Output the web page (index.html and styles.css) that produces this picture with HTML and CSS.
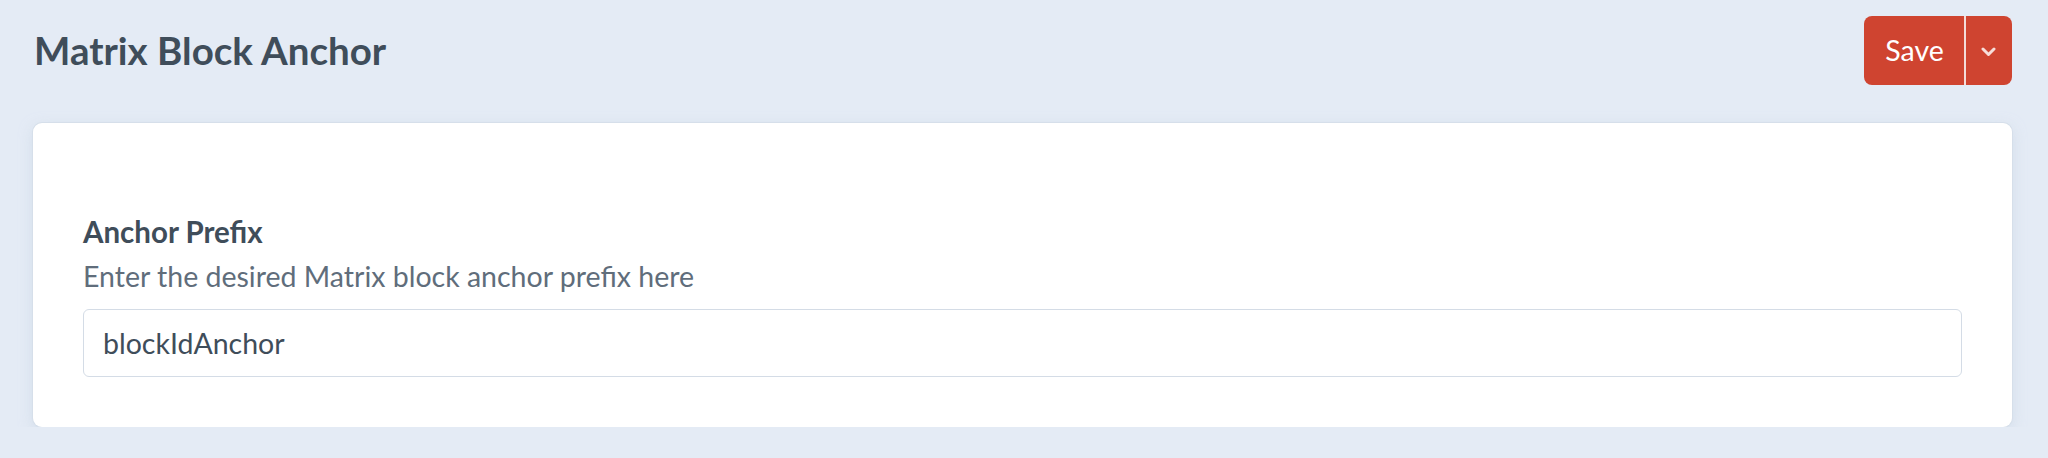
FILE: index.html
```html
<!DOCTYPE html>
<html lang="en">
<head>
<meta charset="utf-8">
<title>Matrix Block Anchor</title>
<link rel="stylesheet" href="styles.css">
</head>
<body>
<div class="page">
  <header class="page-header">
    <h1 class="page-title">Matrix Block Anchor</h1>
    <div class="btngroup">
      <button class="btn btn-save" type="button">Save</button>
      <button class="btn btn-menu" type="button" aria-label="More save options">
        <svg class="chevron" width="15" height="10" viewBox="0 0 15 10"><path d="M2 2 L7.5 7.5 L13 2" fill="none" stroke="currentColor" stroke-width="3" stroke-linecap="round" stroke-linejoin="round"/></svg>
      </button>
    </div>
  </header>
  <main class="card">
    <div class="field">
      <label class="field-label" for="anchorPrefix">Anchor Prefix</label>
      <div class="field-instructions">Enter the desired Matrix block anchor prefix here</div>
      <input class="text-input" id="anchorPrefix" type="text" value="blockIdAnchor">
    </div>
  </main>
</div>
</body>
</html>
```
FILE: styles.css
```css
* { box-sizing: border-box; }
html, body { margin: 0; padding: 0; }
body {
  background: #e4ebf5;
  font-family: Lato, "Open Sans", sans-serif;
  color: #3f4d5a;
  font-size: 28.5px;
  line-height: 1.2;
}
.page {
  padding: 16px 36px 0 33px;
}
.page-header {
  display: flex;
  align-items: center;
  justify-content: space-between;
  height: 69px;
  margin-bottom: 38px;
}
.page-title {
  margin: 0;
  font-size: 38.5px;
  font-weight: 700;
  line-height: 1.2;
  color: #3f4d5a;
  padding-left: 1px;
}
.btngroup {
  display: flex;
  height: 69px;
}
.btn {
  border: 0;
  margin: 0;
  font-family: inherit;
  color: #fff;
  background: #cf4430;
  display: flex;
  align-items: center;
  justify-content: center;
  cursor: pointer;
}
.btn-save {
  width: 100px;
  font-size: 28.5px;
  line-height: 1.2;
  border-radius: 8px 0 0 8px;
  padding: 0 0 0 1px;
}
.btn-menu {
  width: 48px;
  border-left: 2px solid #f4dcd8;
  border-radius: 0 8px 8px 0;
  padding: 0 2px 0 0;
  color: rgba(255,255,255,0.82);
}
.chevron { display: block; margin-top: 2px; }
.card {
  display: block;
  background: #fff;
  border-radius: 9px;
  box-shadow: 0 0 0 1px #d6dfea, 0 4px 14px rgba(196, 210, 226, 0.6);
  padding: 91px 50px 50px 50px;
}
.field { display: flex; flex-direction: column; }
.field-label {
  font-weight: 700;
  font-size: 29.5px;
  line-height: 1.2;
  color: #3f4d5a;
}
.field-instructions {
  margin-top: 10px;
  color: #606d7b;
  font-size: 28.5px;
  line-height: 1.2;
}
.text-input {
  margin-top: 15px;
  height: 68px;
  width: 100%;
  border: 1.5px solid #d4dce6;
  border-radius: 6px;
  padding: 0 19px;
  font-family: inherit;
  font-size: 28.5px;
  color: #3f4d5a;
  background: #fff;
  outline: none;
}
```
